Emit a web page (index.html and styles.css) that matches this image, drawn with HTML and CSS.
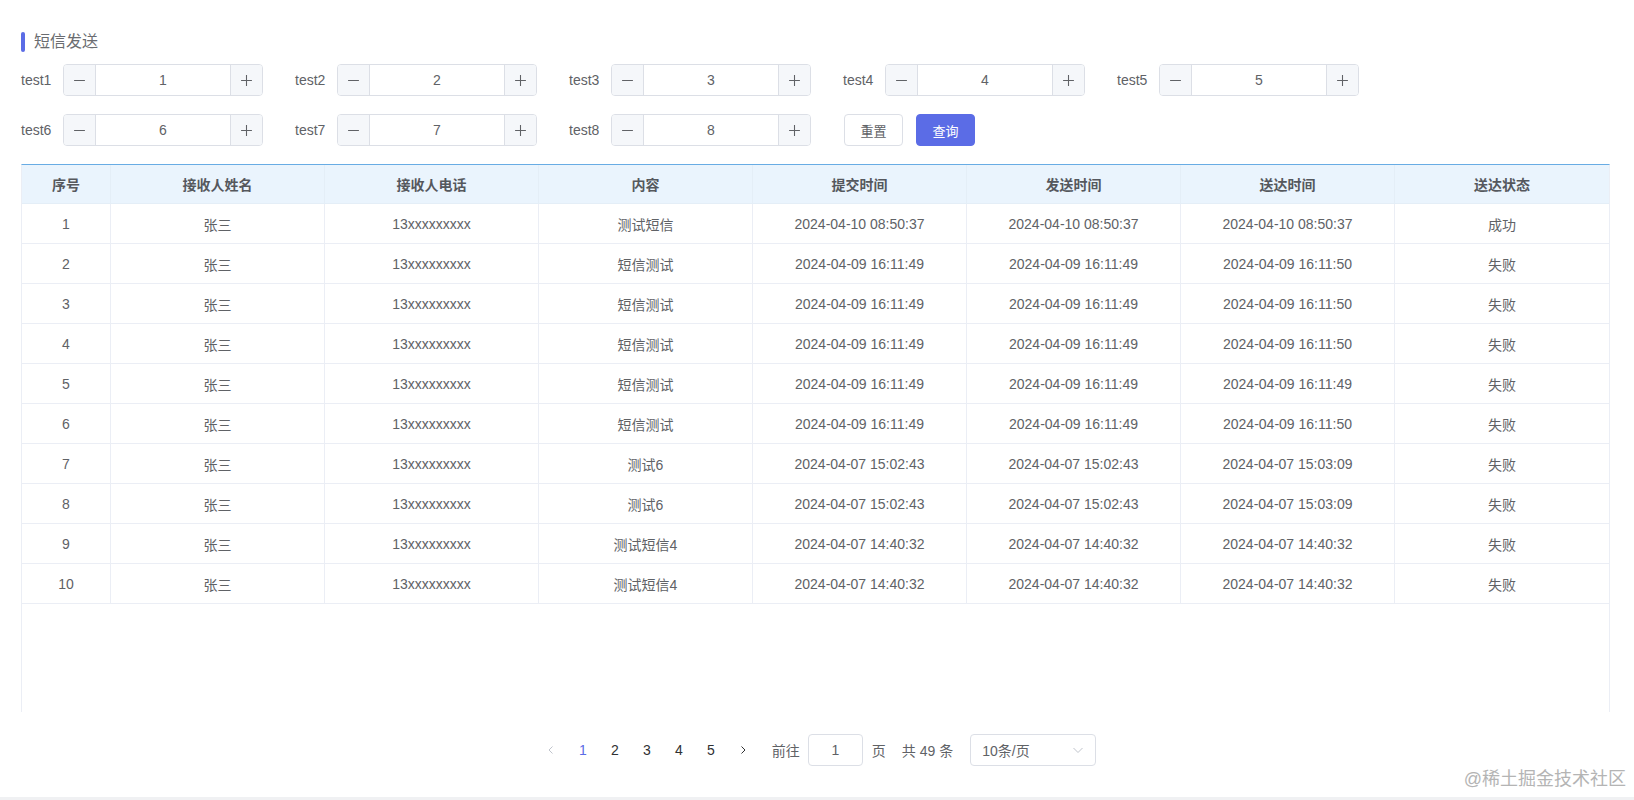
FILE: index.html
```html
<!DOCTYPE html>
<html lang="zh-CN">
<head>
<meta charset="utf-8">
<title>短信发送</title>
<link rel="stylesheet" href="styles.css">
</head>
<body>
<div class="app">
  <div class="title"><span class="title-bar"></span><span class="title-text">短信发送</span></div>

  <div class="form-row">
    <div class="item"><span class="label">test1</span><div class="num"><span class="btn"><svg viewBox="0 0 12 12"><path d="M1 6h10"/></svg></span><span class="val">1</span><span class="btn"><svg viewBox="0 0 12 12"><path d="M1 6h10M6 1v10"/></svg></span></div></div>
    <div class="item"><span class="label">test2</span><div class="num"><span class="btn"><svg viewBox="0 0 12 12"><path d="M1 6h10"/></svg></span><span class="val">2</span><span class="btn"><svg viewBox="0 0 12 12"><path d="M1 6h10M6 1v10"/></svg></span></div></div>
    <div class="item"><span class="label">test3</span><div class="num"><span class="btn"><svg viewBox="0 0 12 12"><path d="M1 6h10"/></svg></span><span class="val">3</span><span class="btn"><svg viewBox="0 0 12 12"><path d="M1 6h10M6 1v10"/></svg></span></div></div>
    <div class="item"><span class="label">test4</span><div class="num"><span class="btn"><svg viewBox="0 0 12 12"><path d="M1 6h10"/></svg></span><span class="val">4</span><span class="btn"><svg viewBox="0 0 12 12"><path d="M1 6h10M6 1v10"/></svg></span></div></div>
    <div class="item"><span class="label">test5</span><div class="num"><span class="btn"><svg viewBox="0 0 12 12"><path d="M1 6h10"/></svg></span><span class="val">5</span><span class="btn"><svg viewBox="0 0 12 12"><path d="M1 6h10M6 1v10"/></svg></span></div></div>
  </div>

  <div class="form-row second">
    <div class="item"><span class="label">test6</span><div class="num"><span class="btn"><svg viewBox="0 0 12 12"><path d="M1 6h10"/></svg></span><span class="val">6</span><span class="btn"><svg viewBox="0 0 12 12"><path d="M1 6h10M6 1v10"/></svg></span></div></div>
    <div class="item"><span class="label">test7</span><div class="num"><span class="btn"><svg viewBox="0 0 12 12"><path d="M1 6h10"/></svg></span><span class="val">7</span><span class="btn"><svg viewBox="0 0 12 12"><path d="M1 6h10M6 1v10"/></svg></span></div></div>
    <div class="item"><span class="label">test8</span><div class="num"><span class="btn"><svg viewBox="0 0 12 12"><path d="M1 6h10"/></svg></span><span class="val">8</span><span class="btn"><svg viewBox="0 0 12 12"><path d="M1 6h10M6 1v10"/></svg></span></div></div>
    <div class="actions">
      <button class="button">重置</button>
      <button class="button primary">查询</button>
    </div>
  </div>

  <div class="table">
    <div class="row head">
      <div class="cell">序号</div><div class="cell">接收人姓名</div><div class="cell">接收人电话</div><div class="cell">内容</div><div class="cell">提交时间</div><div class="cell">发送时间</div><div class="cell">送达时间</div><div class="cell">送达状态</div>
    </div>
    <div class="row"><div class="cell">1</div><div class="cell">张三</div><div class="cell">13xxxxxxxxx</div><div class="cell">测试短信</div><div class="cell">2024-04-10 08:50:37</div><div class="cell">2024-04-10 08:50:37</div><div class="cell">2024-04-10 08:50:37</div><div class="cell">成功</div></div>
    <div class="row"><div class="cell">2</div><div class="cell">张三</div><div class="cell">13xxxxxxxxx</div><div class="cell">短信测试</div><div class="cell">2024-04-09 16:11:49</div><div class="cell">2024-04-09 16:11:49</div><div class="cell">2024-04-09 16:11:50</div><div class="cell">失败</div></div>
    <div class="row"><div class="cell">3</div><div class="cell">张三</div><div class="cell">13xxxxxxxxx</div><div class="cell">短信测试</div><div class="cell">2024-04-09 16:11:49</div><div class="cell">2024-04-09 16:11:49</div><div class="cell">2024-04-09 16:11:50</div><div class="cell">失败</div></div>
    <div class="row"><div class="cell">4</div><div class="cell">张三</div><div class="cell">13xxxxxxxxx</div><div class="cell">短信测试</div><div class="cell">2024-04-09 16:11:49</div><div class="cell">2024-04-09 16:11:49</div><div class="cell">2024-04-09 16:11:50</div><div class="cell">失败</div></div>
    <div class="row"><div class="cell">5</div><div class="cell">张三</div><div class="cell">13xxxxxxxxx</div><div class="cell">短信测试</div><div class="cell">2024-04-09 16:11:49</div><div class="cell">2024-04-09 16:11:49</div><div class="cell">2024-04-09 16:11:49</div><div class="cell">失败</div></div>
    <div class="row"><div class="cell">6</div><div class="cell">张三</div><div class="cell">13xxxxxxxxx</div><div class="cell">短信测试</div><div class="cell">2024-04-09 16:11:49</div><div class="cell">2024-04-09 16:11:49</div><div class="cell">2024-04-09 16:11:50</div><div class="cell">失败</div></div>
    <div class="row"><div class="cell">7</div><div class="cell">张三</div><div class="cell">13xxxxxxxxx</div><div class="cell">测试6</div><div class="cell">2024-04-07 15:02:43</div><div class="cell">2024-04-07 15:02:43</div><div class="cell">2024-04-07 15:03:09</div><div class="cell">失败</div></div>
    <div class="row"><div class="cell">8</div><div class="cell">张三</div><div class="cell">13xxxxxxxxx</div><div class="cell">测试6</div><div class="cell">2024-04-07 15:02:43</div><div class="cell">2024-04-07 15:02:43</div><div class="cell">2024-04-07 15:03:09</div><div class="cell">失败</div></div>
    <div class="row"><div class="cell">9</div><div class="cell">张三</div><div class="cell">13xxxxxxxxx</div><div class="cell">测试短信4</div><div class="cell">2024-04-07 14:40:32</div><div class="cell">2024-04-07 14:40:32</div><div class="cell">2024-04-07 14:40:32</div><div class="cell">失败</div></div>
    <div class="row"><div class="cell">10</div><div class="cell">张三</div><div class="cell">13xxxxxxxxx</div><div class="cell">测试短信4</div><div class="cell">2024-04-07 14:40:32</div><div class="cell">2024-04-07 14:40:32</div><div class="cell">2024-04-07 14:40:32</div><div class="cell">失败</div></div>
  </div>

  <div class="pager">
    <span class="nav disabled"><svg viewBox="0 0 12 12"><path d="M7.5 2.5L4 6l3.5 3.5"/></svg></span>
    <span class="page active">1</span>
    <span class="page">2</span>
    <span class="page">3</span>
    <span class="page">4</span>
    <span class="page">5</span>
    <span class="nav"><svg viewBox="0 0 12 12"><path d="M4.5 2.5L8 6l-3.5 3.5"/></svg></span>
    <span class="jump">前往</span>
    <span class="jump-input">1</span>
    <span class="jump-unit">页</span>
    <span class="total">共 49 条</span>
    <span class="size-select"><span>10条/页</span><svg viewBox="0 0 14 14"><path d="M2.5 5l4.5 4.5L11.5 5"/></svg></span>
  </div>

  <div class="watermark">@稀土掘金技术社区</div>
</div>
</body>
</html>
```

FILE: styles.css
```css
* { box-sizing: border-box; }
html, body { margin: 0; padding: 0; background: #fff; }
body {
  font-family: "Liberation Sans", "Noto Sans CJK SC", sans-serif;
  font-size: 14px;
  color: #606266;
}
.app {
  position: relative;
  height: 800px;
  padding: 32px 24px 0 21px;
  border-bottom: 3px solid #f0f1f3;
  overflow: hidden;
}
.title {
  display: flex;
  align-items: center;
  height: 20px;
}
.title-bar {
  width: 4px;
  height: 20px;
  background: #5b6ce6;
  border-radius: 2px;
}
.title-text {
  margin-left: 9px;
  font-size: 16px;
  color: #6a6c70;
  line-height: 20px;
}
.form-row {
  display: flex;
  align-items: center;
  margin-top: 12px;
  height: 32px;
}
.form-row.second { margin-top: 18px; }
.item {
  display: flex;
  align-items: center;
  margin-right: 32px;
}
.label {
  width: 42px;
  color: #606266;
}
.num {
  display: flex;
  width: 200px;
  height: 32px;
  border: 1px solid #dcdfe6;
  border-radius: 4px;
  overflow: hidden;
}
.num .btn {
  width: 32px;
  flex: none;
  display: flex;
  align-items: center;
  justify-content: center;
  background: #f5f7fa;
}
.num .btn:first-child { border-right: 1px solid #dcdfe6; }
.num .btn:last-child { border-left: 1px solid #dcdfe6; }
.num .btn svg {
  width: 13px;
  height: 13px;
  fill: none;
  stroke: #606266;
  stroke-width: 1;
}
.num .val {
  flex: 1;
  display: flex;
  align-items: center;
  justify-content: center;
  color: #606266;
}
.actions {
  display: flex;
  gap: 13px;
  margin-left: 1px;
}
.button {
  height: 32px;
  width: 59px;
  padding: 0;
  border: 1px solid #dcdfe6;
  border-radius: 4px;
  background: #fff;
  color: #606266;
  font-family: inherit;
  font-size: 13px;
}
.button.primary {
  background: #5b6ce6;
  border-color: #5b6ce6;
  color: #fff;
}
.table {
  margin-top: 18px;
  width: 1589px;
  height: 548px;
  border-top: 1px solid #68ace4;
  border-left: 1px solid #ebeef5;
  border-right: 1px solid #ebeef5;
}
.row {
  display: grid;
  grid-template-columns: 89px repeat(7, 1fr);
  height: 40px;
  border-bottom: 1px solid #ebeef5;
}
.row.head {
  height: 39px;
  background: #eaf4fd;
  border-bottom: 1px solid #e4eef7;
}
.cell {
  display: flex;
  align-items: center;
  justify-content: center;
  border-right: 1px solid #ebeef5;
  color: #606266;
  white-space: nowrap;
}
.cell:last-child { border-right: none; }
.head .cell {
  font-weight: bold;
  color: #55585d;
  border-right-color: #e4eef7;
}
.pager {
  margin-top: 22px;
  display: flex;
  align-items: center;
  justify-content: center;
  height: 32px;
  color: #606266;
}
.nav, .page {
  width: 32px;
  height: 32px;
  display: flex;
  align-items: center;
  justify-content: center;
  color: #303133;
}
.nav svg {
  width: 12px;
  height: 12px;
  fill: none;
  stroke: #303133;
  stroke-width: 1;
}
.nav.disabled svg { stroke: #c0c4cc; }
.page.active { color: #5b6ce6; }
.jump { margin-left: 13px; }
.jump-input {
  margin-left: 8px;
  width: 55px;
  height: 32px;
  border: 1px solid #dcdfe6;
  border-radius: 4px;
  display: flex;
  align-items: center;
  justify-content: center;
}
.jump-unit { margin-left: 9px; }
.total { margin-left: 16px; }
.size-select {
  margin-left: 17px;
  width: 126px;
  height: 32px;
  border: 1px solid #dcdfe6;
  border-radius: 4px;
  display: flex;
  align-items: center;
  justify-content: space-between;
  padding: 0 10px 0 11px;
}
.size-select svg {
  width: 14px;
  height: 14px;
  fill: none;
  stroke: #c0c4cc;
  stroke-width: 1;
}
.watermark {
  position: absolute;
  right: 8px;
  bottom: 6px;
  font-size: 18px;
  color: #b4b4b4;
  line-height: 24px;
}
```
